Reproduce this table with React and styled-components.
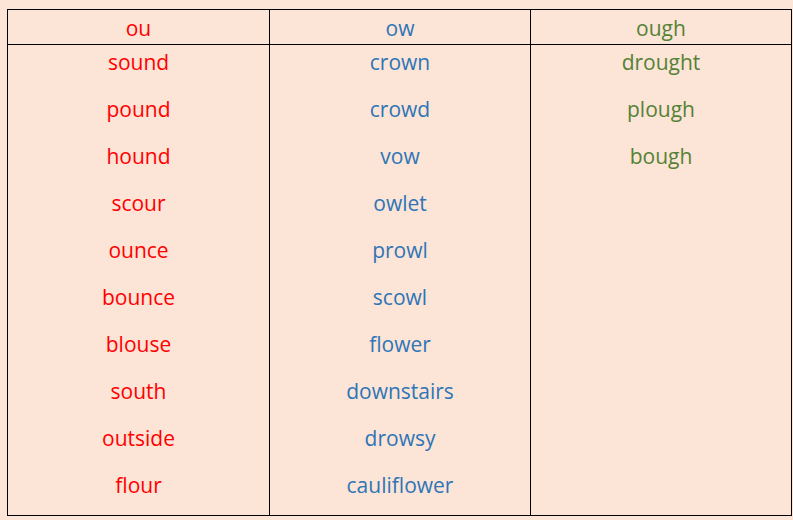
import React from 'react'
import styled, { createGlobalStyle } from 'styled-components'

const GlobalStyle = createGlobalStyle`
  html, body {
    margin: 0;
    padding: 0;
    background: #fce4d6;
  }
  body {
    font-family: "Comic Sans MS", "Open Sans", "DejaVu Sans", sans-serif;
  }
`

const columns = [
  {
    title: 'ou',
    color: '#ff0000',
    words: ['sound', 'pound', 'hound', 'scour', 'ounce', 'bounce', 'blouse', 'south', 'outside', 'flour'],
  },
  {
    title: 'ow',
    color: '#2e75b6',
    words: ['crown', 'crowd', 'vow', 'owlet', 'prowl', 'scowl', 'flower', 'downstairs', 'drowsy', 'cauliflower'],
  },
  {
    title: 'ough',
    color: '#548235',
    words: ['drought', 'plough', 'bough'],
  },
]

const Page = styled.div`
  width: 793px;
  height: 520px;
  padding: 9px 0 0 7px;
  box-sizing: border-box;
`

const Table = styled.div`
  width: 785px;
  height: 507px;
  box-sizing: border-box;
  border: 1px solid #000;
  display: grid;
  grid-template-columns: 262px 261px 1fr;
  grid-template-rows: 35px 1fr;
`

const HeadCell = styled.div`
  color: ${(p) => p.$color};
  font-size: 21px;
  display: flex;
  align-items: center;
  justify-content: center;
  border-bottom: 1px solid #000;
  border-right: ${(p) => (p.$last ? 'none' : '1px solid #000')};
  padding-top: 2px;
  box-sizing: border-box;
`

const Column = styled.div`
  display: flex;
  flex-direction: column;
  align-items: center;
  gap: 23px;
  padding-top: 5px;
  border-right: ${(p) => (p.$last ? 'none' : '1px solid #000')};
`

const Word = styled.div`
  color: ${(p) => p.$color};
  font-size: 21px;
  line-height: 24px;
  height: 24px;
`

export default function App() {
  return (
    <Page>
      <GlobalStyle />
      <Table>
        {columns.map((c, i) => (
          <HeadCell key={c.title} $color={c.color} $last={i === columns.length - 1}>
            {c.title}
          </HeadCell>
        ))}
        {columns.map((c, i) => (
          <Column key={c.title} $last={i === columns.length - 1}>
            {c.words.map((w) => (
              <Word key={w} $color={c.color}>
                {w}
              </Word>
            ))}
          </Column>
        ))}
      </Table>
    </Page>
  )
}
